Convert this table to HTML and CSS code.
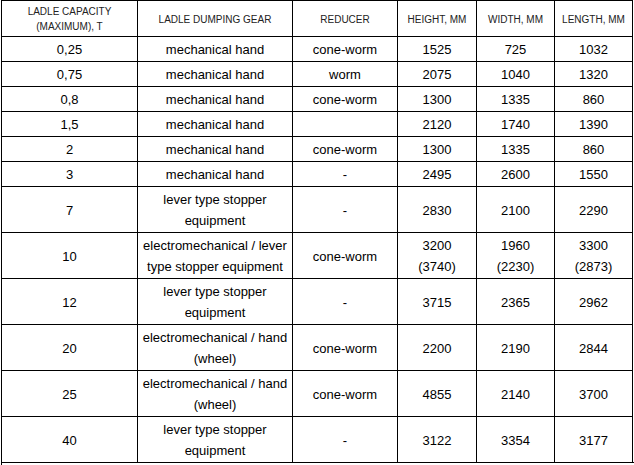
FILE: index.html
```html
<!DOCTYPE html>
<html>
<head>
<meta charset="utf-8">
<link rel="stylesheet" href="styles.css">
</head>
<body>
<table class="specs">
  <colgroup>
    <col class="c1"><col class="c2"><col class="c3"><col class="c4"><col class="c5"><col class="c6">
  </colgroup>
  <thead>
    <tr>
      <th>LADLE CAPACITY<br>(MAXIMUM), T</th>
      <th>LADLE DUMPING GEAR</th>
      <th>REDUCER</th>
      <th>HEIGHT, MM</th>
      <th>WIDTH, MM</th>
      <th>LENGTH, MM</th>
    </tr>
  </thead>
  <tbody>
    <tr><td>0,25</td><td>mechanical hand</td><td>cone-worm</td><td>1525</td><td>725</td><td>1032</td></tr>
    <tr><td>0,75</td><td>mechanical hand</td><td>worm</td><td>2075</td><td>1040</td><td>1320</td></tr>
    <tr><td>0,8</td><td>mechanical hand</td><td>cone-worm</td><td>1300</td><td>1335</td><td>860</td></tr>
    <tr><td>1,5</td><td>mechanical hand</td><td></td><td>2120</td><td>1740</td><td>1390</td></tr>
    <tr><td>2</td><td>mechanical hand</td><td>cone-worm</td><td>1300</td><td>1335</td><td>860</td></tr>
    <tr><td>3</td><td>mechanical hand</td><td>-</td><td>2495</td><td>2600</td><td>1550</td></tr>
    <tr><td>7</td><td>lever type stopper<br>equipment</td><td>-</td><td>2830</td><td>2100</td><td>2290</td></tr>
    <tr><td>10</td><td>electromechanical / lever<br>type stopper equipment</td><td>cone-worm</td><td>3200<br>(3740)</td><td>1960<br>(2230)</td><td>3300<br>(2873)</td></tr>
    <tr><td>12</td><td>lever type stopper<br>equipment</td><td>-</td><td>3715</td><td>2365</td><td>2962</td></tr>
    <tr><td>20</td><td>electromechanical / hand<br>(wheel)</td><td>cone-worm</td><td>2200</td><td>2190</td><td>2844</td></tr>
    <tr><td>25</td><td>electromechanical / hand<br>(wheel)</td><td>cone-worm</td><td>4855</td><td>2140</td><td>3700</td></tr>
    <tr><td>40</td><td>lever type stopper<br>equipment</td><td>-</td><td>3122</td><td>3354</td><td>3177</td></tr>
  </tbody>
</table>
<div class="next-box"></div>
</body>
</html>
```
FILE: styles.css
```css
html, body {
  margin: 0;
  padding: 0;
  background: #ffffff;
}
body {
  font-family: "Liberation Sans", Arial, sans-serif;
  color: #000;
  overflow: hidden;
  height: 465px;
}
.specs {
  border-collapse: collapse;
  table-layout: fixed;
  margin-left: 1px;
  width: 631px;
}
.c1 { width: 136px; }
.c2 { width: 155px; }
.c3 { width: 105px; }
.c4 { width: 79px; }
.c5 { width: 78px; }
.c6 { width: 78px; }
.specs th,
.specs td {
  border: 1px solid #000;
  text-align: center;
  vertical-align: middle;
  padding: 2px 2px 1px;
}
.specs th {
  font-weight: normal;
  font-size: 10px;
  line-height: 15px;
  color: #222;
  padding: 3px 2px 2px;
}
.specs td {
  font-size: 13px;
  line-height: 21px;
}
.next-box {
  margin-left: 1px;
  height: 20px;
  border-left: 1px solid #000;
  border-top: 1px solid #000;
  margin-top: -1px;
}
```
